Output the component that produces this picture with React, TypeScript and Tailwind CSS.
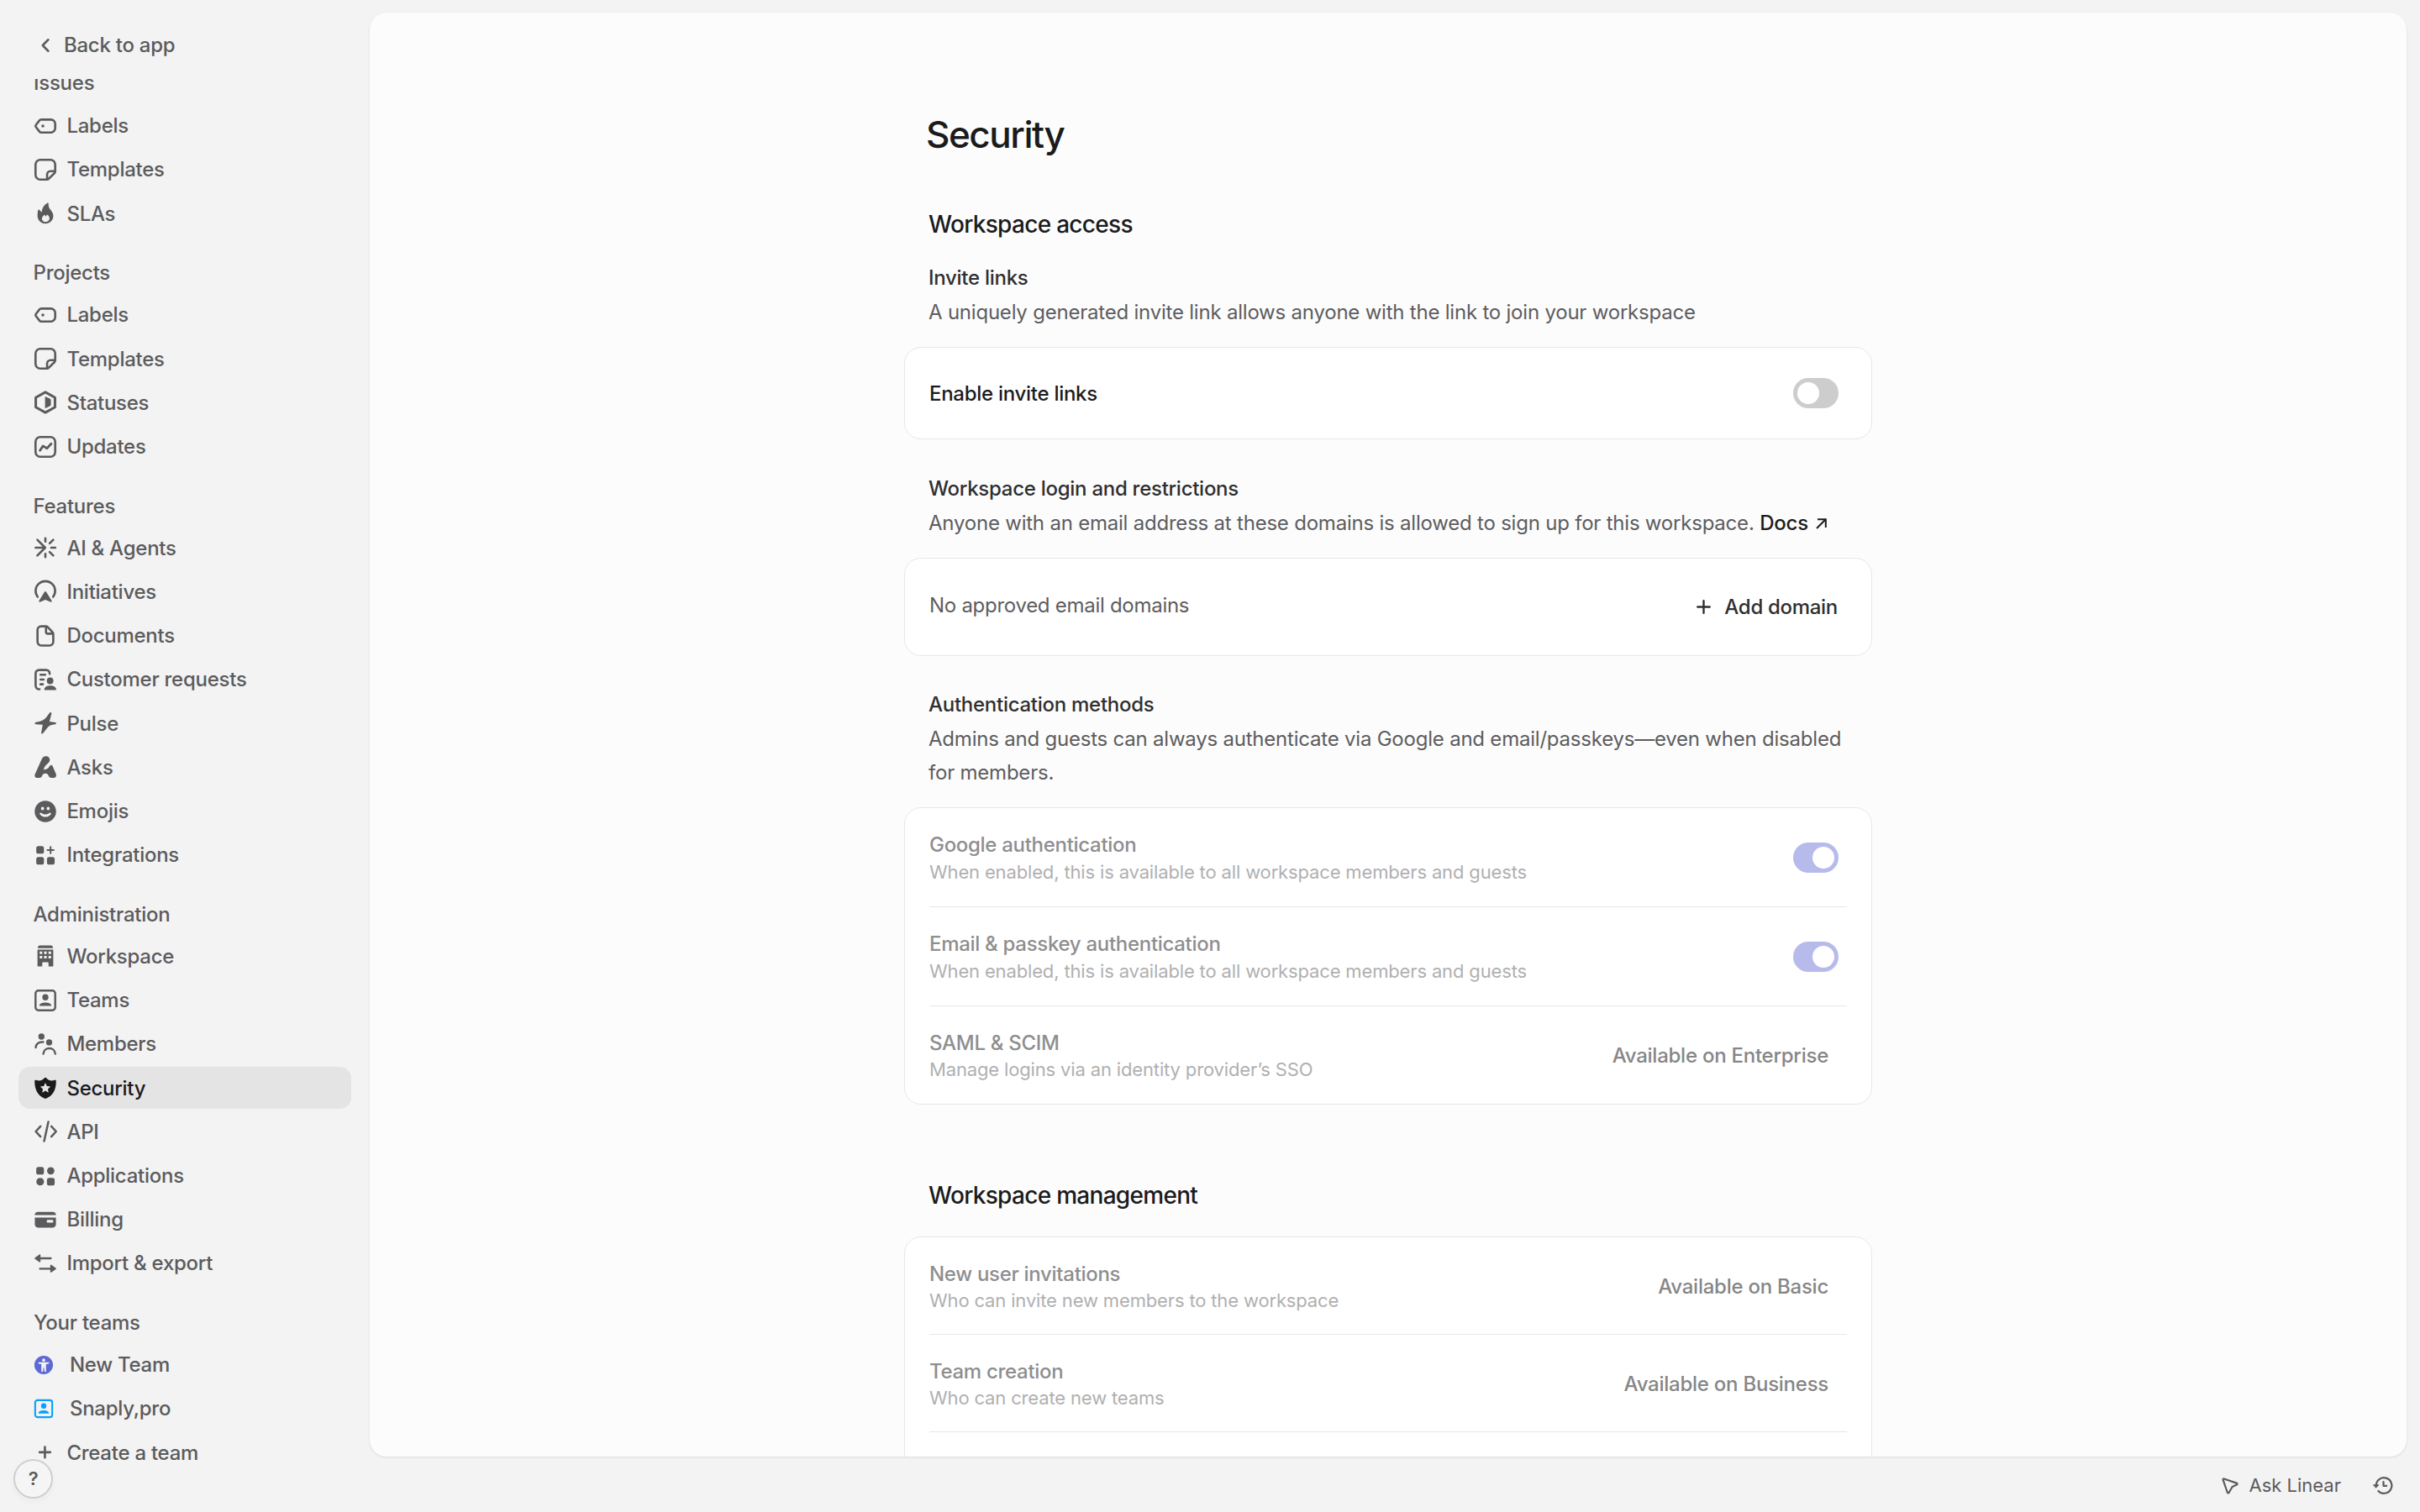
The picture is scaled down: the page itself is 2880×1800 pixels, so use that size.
import type { ReactNode } from "react";

const S = { fill: "none", stroke: "currentColor", strokeWidth: 1.5, strokeLinecap: "round", strokeLinejoin: "round" } as const;

function Icon({ children, size = "w-[30px] h-[30px]" }: { children: ReactNode; size?: string }) {
  return (
    <svg viewBox="0 0 16 16" fill="currentColor" className={`${size} shrink-0`}>
      {children}
    </svg>
  );
}

const icons: Record<string, ReactNode> = {
  labels: (
    <>
      <path {...S} strokeWidth={1.4} d="M5.4 3.9h6.1a2.75 2.75 0 0 1 2.75 2.75v2.7a2.75 2.75 0 0 1-2.75 2.75H5.4a1.5 1.5 0 0 1-1.15-.55L2 8.65a1 1 0 0 1 0-1.3l2.25-2.9A1.5 1.5 0 0 1 5.4 3.9Z" />
      <circle cx="6.4" cy="8" r="0.95" />
    </>
  ),
  templates: (
    <path {...S} strokeWidth={1.4} d="M9.1 14.25H4.75a3 3 0 0 1-3-3v-6.5a3 3 0 0 1 3-3h6.5a3 3 0 0 1 3 3v4.3a1.5 1.5 0 0 1-.44 1.06l-3.7 3.7a1.5 1.5 0 0 1-1.01.44v-3.2A2.15 2.15 0 0 1 11.25 8.9h2.9" />
  ),
  flame: (
    <path fillRule="evenodd" d="M8 14.5c-2.9 0-5-2.1-5-5 0-1.3.1-2.5.3-3.4.1-.5.6-.6.9-.2L5.7 7.3C5.9 4.7 7 2.6 9.2 1.4c.4-.2.8 0 .8.5-.1 1.5.3 2.5 1.2 3.7C12.3 7 13 8 13 9.6c0 2.8-2.1 4.900-5 4.900Zm.1-1.100c1.500 0 2.500-.9 2.500-2.200 0-.8-.4-1.500-1-2.100-.3-.3-.8-.2-.9.2l-.3.7c-.3-.2-.5-.5-.6-.8 0-.3-.3-.4-.5-.2-.9.9-1.500 1.300-1.500 2.300 0 1.200.9 2.100 2.300 2.100Z" />
  ),
  statuses: (
    <>
      <path {...S} strokeWidth={1.6} d="M8 1.550 14.100 4.950v6.100L8 14.450 1.900 11.050v-6.100Z" />
      <path d="M7.800 4.200 10.800 5.600a1.100 1.100 0 0 1 .7 1v2.800a1.100 1.100 0 0 1-.7 1L7.800 11.800Z" />
    </>
  ),
  updates: (
    <>
      <rect {...S} strokeWidth={1.4} x="1.75" y="1.75" width="12.5" height="12.5" rx="3" />
      <path {...S} d="M4.600 10.300 6.500 7.400 9 8.900 11.700 6" />
    </>
  ),
  ai: (
    <path {...S} strokeWidth={1.4} d="M8 2v2.100M8 11.900v2.100M11.700 8h2.600M10.700 5.300l2.300-2.300M10.700 10.700l2.300 2.300M1.800 8h6M2.900 3 7.900 8 2.900 13M6.800 7.500 7.500 8l-.7.500" />
  ),
  initiatives: (
    <>
      <path {...S} strokeWidth={1.4} d="M3.100 11.500a6.200 6.200 0 1 1 9.800 0" />
      <path d="M7.500 8.300c.2-.4.8-.4 1 0l3.500 5.500c.3.600-.2 1.200-.8.900L8 13.300l-3.200 1.400c-.6.300-1.100-.3-.8-.9Z" />
    </>
  ),
  documents: (
    <path {...S} strokeWidth={1.4} d="M8.400 1.900H5.300A2.300 2.300 0 0 0 3 4.200v7.600a2.300 2.300 0 0 0 2.300 2.300h5.400a2.300 2.300 0 0 0 2.300-2.300V6.700c0-.4-.2-.8-.5-1.100L9.400 2.300c-.3-.3-.6-.4-1-.4Zm0 .1v3.400c0 .7.500 1.200 1.200 1.200h3.300" />
  ),
  customer: (
    <>
      <path {...S} strokeWidth={1.4} d="M4.300 14.100h-.3a2.200 2.200 0 0 1-2.200-2.200V4.100a2.200 2.200 0 0 1 2.200-2.200h4.500a2.200 2.200 0 0 1 2.200 2.200v.3M4.900 4.900h3M4.900 8h2M4.900 11h1.500" />
      <circle cx="11" cy="8.800" r="2.100" />
      <path d="M7.300 14.100c.2-1.500 1.800-2.300 3.800-2.300s3.500.8 3.800 2.300c0 .3-.2.600-.5.600H7.800c-.3 0-.5-.3-.5-.6Z" />
    </>
  ),
  pulse: (
    <path d="M11.900 1.900 10.600 6.900l3.700.5c.8.1.8 1.100 0 1.200-2.400.1-4.100.9-5.400 2.700l-2.300 3c-.5.7-1.400.3-1.200-.5l.9-4.900-4.300-.2c-.9-.1-.9-1.200 0-1.400 3.200-.3 5.400-1.500 6.900-3.500l1.700-2.400c.5-.6 1.400-.300 1.300.5Z" />
  ),
  asks: (
    <path d="M5.800 2.800C6.300 1.700 7.200 1.200 8.300 1.200c1.500 0 2.600 1.100 2.500 2.500-.1 1-.8 1.700-1.600 2.400C7.900 7.200 7 8.300 7 9.700c1.500-.1 2.700-.7 3.500-1.900.3-.5.7-1 1.200-1 .4 0 .7.300.9.700l2.200 5.200c.4 1.100-.2 2.200-1.300 2.200h-1.600c-.9 0-1.500-.400-1.800-1.200-.3-.9-1.100-1.600-2.100-1.600s-1.800.7-2.100 1.600c-.3.800-.8 1.200-1.700 1.200H2.800c-1.200 0-1.900-1.100-1.400-2.300Z" />
  ),
  emojis: (
    <path fillRule="evenodd" d="M8 1.200a6.800 6.800 0 1 0 0 13.600A6.800 6.800 0 0 0 8 1.200ZM6.200 5a1 1.100 0 1 0 0 2.200 1 1.100 0 0 0 0-2.200Zm3.600 0a1 1.100 0 1 0 0 2.200 1 1.100 0 0 0 0-2.200ZM5.300 8.900c-.5-.4-1.200.2-.8.800C5.300 10.800 6.600 11.500 8 11.500s2.700-.7 3.500-1.800c.4-.6-.3-1.200-.8-.8-1.600 1.300-3.800 1.300-5.400 0Z" />
  ),
  integrations: (
    <>
      <rect x="2.200" y="2.300" width="4.900" height="4.800" rx="1.400" />
      <rect x="2.200" y="9.200" width="4.900" height="4.800" rx="1.400" />
      <rect x="9" y="9.200" width="4.900" height="4.800" rx="1.400" />
      <path {...S} strokeWidth={1.1} d="M11.300 2.800v4M9.300 4.800h4" />
    </>
  ),
  workspace: (
    <path fillRule="evenodd" d="M4.500 1.300h7c.7 0 1.300.6 1.300 1.400v.4H3.200v-.4c0-.8.600-1.400 1.300-1.400ZM3 4h10v10.200c0 .3-.2.500-.5.500H10v-2.200c0-.3-.2-.5-.5-.5h-3c-.3 0-.5.200-.5.500v2.200H3.500c-.3 0-.5-.2-.5-.5Zm1.400 1.200v1.600H6V5.200Zm2.800 0v1.600h1.600V5.200Zm2.800 0v1.600h1.600V5.200ZM4.400 8v1.600H6V8Zm2.800 0v1.600h1.600V8ZM10 8v1.600h1.600V8Z" />
  ),
  teams: (
    <>
      <rect {...S} strokeWidth={1.3} x="1.75" y="1.75" width="12.5" height="12.5" rx="1.8" />
      <circle cx="8" cy="6" r="1.950" />
      <path d="M4.200 11c.3-1.100 1.900-1.700 3.800-1.700s3.500.6 3.800 1.700c.1.300-.1.500-.4.500H4.600c-.3 0-.5-.2-.4-.5Z" />
    </>
  ),
  members: (
    <>
      <circle cx="5.500" cy="3.200" r="1.950" />
      <circle cx="10.400" cy="6.900" r="1.950" />
      <path {...S} strokeWidth={1.3} d="M1.900 10.200c.2-2.200 1.900-3.600 4.700-3.500M6.700 14.200c.2-2.100 1.700-3.500 3.800-3.500s3.600 1.400 3.800 3.500" />
    </>
  ),
  security: (
    <path fillRule="evenodd" d="M7.400 1.700c.3-.4.900-.4 1.200 0 1.400 1.600 3.100 2.200 5.300 1.400.5-.2.900.1.900.6.100 5.400-2.100 9.300-6 10.900-.5.200-1.100.2-1.600 0-3.900-1.600-6.100-5.500-6-10.900 0-.5.400-.8.900-.6 2.200.8 3.900.2 5.300-1.400ZM8 4.800l-1 2.100-2.300.3 1.700 1.600-.4 2.200L8 9.900l2 1.100-.4-2.200 1.700-1.600-2.300-.3Z" />
  ),
  api: (
    <path {...S} strokeWidth={1.35} d="M4.900 4.700 1.900 8l3 3.300M11.800 4.700l3 3.300-3 3.300M9.900 1.900 7.200 14.100" />
  ),
  applications: (
    <>
      <rect x="2.200" y="2.300" width="4.900" height="4.800" rx="1.400" />
      <circle cx="4.700" cy="11.600" r="2.450" />
      <rect x="9" y="9.200" width="4.900" height="4.800" rx="1.400" />
      <circle cx="11.400" cy="4.700" r="2.350" />
    </>
  ),
  billing: (
    <path fillRule="evenodd" d="M3.200 3h9.600c1 0 1.900.7 1.900 1.700v.4H1.300v-.4c0-1 .9-1.700 1.900-1.700ZM1.300 6.700h13.400v4.400c0 1-.9 1.900-1.900 1.900H3.200c-1 0-1.900-.9-1.900-1.900Zm8.100 1.400c-.3 0-.5.200-.5.500v.7c0 .3.200.5.500.5h3.100c.3 0 .5-.2.500-.5v-.7c0-.3-.2-.5-.5-.5Z" />
  ),
  importExport: (
    <>
      <path {...S} strokeWidth={1.3} d="M4.500 4.800h6.900M4.600 11.400h6.900" />
      <path d="M4.900 2.900v3.900c0 .4-.4.6-.7.400L1.400 5.200c-.3-.2-.3-.6 0-.8l2.800-2c.3-.2.700 0 .7.500ZM11.100 9.400v3.900c0 .4.400.6.700.4l2.800-2c.3-.2.300-.6 0-.8l-2.800-2c-.3-.2-.7 0-.7.500Z" />
    </>
  ),
};

type Item = [string, string];
const groups: { title: string; items: Item[] }[] = [
  { title: "Issues", items: [["labels", "Labels"], ["templates", "Templates"], ["flame", "SLAs"]] },
  { title: "Projects", items: [["labels", "Labels"], ["templates", "Templates"], ["statuses", "Statuses"], ["updates", "Updates"]] },
  {
    title: "Features",
    items: [["ai", "AI & Agents"], ["initiatives", "Initiatives"], ["documents", "Documents"], ["customer", "Customer requests"], ["pulse", "Pulse"], ["asks", "Asks"], ["emojis", "Emojis"], ["integrations", "Integrations"]],
  },
  {
    title: "Administration",
    items: [["workspace", "Workspace"], ["teams", "Teams"], ["members", "Members"], ["security", "Security"], ["api", "API"], ["applications", "Applications"], ["billing", "Billing"], ["importExport", "Import & export"]],
  },
];

function Sidebar() {
  return (
    <aside className="flex h-full w-[440px] shrink-0 flex-col text-[24px] font-medium tracking-[-0.26px] text-[#5b5b5d]">
      <div className="flex h-[94px] shrink-0 items-center pt-[13px] pl-[39px]">
        <Icon><path {...S} strokeWidth={1.35} d="M9.800 4.400 6.300 8l3.500 3.600" /></Icon>
        <span className="ml-[7px]">Back to app</span>
      </div>
      <nav className="min-h-0 flex-1 overflow-hidden">
        <div className="-mt-[19px] flex flex-col gap-[19.9px]">
          {groups.map((g) => (
            <section key={g.title}>
              <h3 className={g.title === "Issues" ? "flex h-[48.6px] items-center pl-[40px]" : "flex h-[48.6px] items-center pt-[2px] pl-[39.5px]"}>{g.title}</h3>
              {g.items.map(([icon, label]) => (
                <div key={label} className="h-[52.23px] px-[22px] py-[0.8px]">
                  <a className={label === "Security" ? "flex h-full items-center rounded-[14px] bg-[#e4e4e4] pl-[17.4px] text-[#1b1b1c]" : "flex h-full items-center pl-[17.4px]"}>
                    <Icon>{icons[icon]}</Icon>
                    <span className="ml-[10px] pt-px">{label}</span>
                  </a>
                </div>
              ))}
            </section>
          ))}
          <section>
            <h3 className="flex h-[48.6px] items-center pt-[2px] pl-[40px]">Your teams</h3>
            <div className="flex h-[52.23px] items-center pl-[39.4px]">
              <span className="text-[#5e6ad2]">
                <Icon size="h-[26px] w-[26px]">
                  <path fillRule="evenodd" d="M8 1.200a6.800 6.800 0 1 0 0 13.600A6.800 6.800 0 0 0 8 1.200ZM8 3.300a1.150 1.150 0 1 0 0 2.300 1.150 1.150 0 0 0 0-2.300ZM4.500 6c-.6 0-.7.900-.1 1l1.900.4v5c0 .8 1.100.8 1.200 0L7.800 9.900h.4l.3 2.500c.1.800 1.200.8 1.200 0v-5l1.900-.4c.6-.1.500-1-.1-1Z" />
                </Icon>
              </span>
              <span className="ml-[17.5px] pt-px">New Team</span>
            </div>
            <div className="flex h-[52.23px] items-center pl-[39.4px]">
              <span className="text-[#08a0ff]"><Icon size="h-[26px] w-[26px]">{icons.teams}</Icon></span>
              <span className="ml-[17.5px] pt-px">Snaply,pro</span>
            </div>
            <div className="flex h-[52.23px] items-center pl-[39.4px]">
              <Icon><path {...S} strokeWidth={1.4} d="M7.700 4.500v6.800M4.300 7.900h6.800" /></Icon>
              <span className="ml-[10px] pt-px">Create a team</span>
            </div>
          </section>
        </div>
      </nav>
      <button className="absolute top-[1737px] left-[16px] flex h-[47px] w-[47px] items-center justify-center rounded-full border-2 border-[#cfcfcf] bg-[#f5f5f5] text-[22px] font-semibold shadow-[0_4px_8px_rgba(0,0,0,0.03)]">?</button>
    </aside>
  );
}

function Toggle({ on = false }: { on?: boolean }) {
  return (
    <span className={on ? "flex h-[36px] w-[54px] items-center justify-end rounded-full bg-[#b7bbeb] px-[5px]" : "flex h-[36px] w-[54px] items-center rounded-full bg-[#cdcdcd] px-[5px]"}>
      <span className="h-[26px] w-[26px] rounded-full bg-white" />
    </span>
  );
}

type RowProps = { title: string; sub: string; children: ReactNode; height: string; lead?: string; last?: boolean };

function Row({ title, sub, children, height, lead = "pt-[3px] leading-[32px]", last }: RowProps) {
  return (
    <div className={`${height} mx-[29px] flex items-center justify-between ${last ? "" : "border-b border-[#e7e7e7]"}`}>
      <div>
        <div className={`${lead} text-[24px] font-medium tracking-[-0.3px] text-[#8e8e8f]`}>{title}</div>
        <div className="text-[22px] leading-[32px] tracking-[-0.15px] text-[#b0b0b1]">{sub}</div>
      </div>
      {children}
    </div>
  );
}

function SectionHead({ title, children }: { title: string; children: ReactNode }) {
  return (
    <div className="ml-[29px] leading-[40px]">
      <h3 className="text-[24px] font-medium tracking-[-0.27px] text-[#2f2f31]">{title}</h3>
      <p className="mt-px text-[24px] tracking-[-0.215px] whitespace-nowrap text-[#5d5d5f]">{children}</p>
    </div>
  );
}

const Available = ({ plan }: { plan: string }) => (
  <span className="pt-[2px] pr-[22px] text-[24px] font-medium tracking-[-0.25px] text-[#868687]">Available on {plan}</span>
);

export default function App() {
  return (
    <div className="relative flex h-[1800px] w-[2880px] overflow-hidden bg-[#f3f3f3] font-['Inter',sans-serif]">
      <Sidebar />
      <div className="flex flex-1 flex-col pt-[15px] pr-[16px]">
        <main className="flex h-[1719px] justify-center overflow-hidden rounded-[20px] bg-[#fcfcfc] shadow-[0_1px_3px_rgba(0,0,0,0.1)]">
          <div className="w-[1152px] shrink-0 pt-[118px]">
            <h1 className="ml-[26px] text-[44px] leading-[54px] font-medium tracking-[-1.45px] text-[#1b1b1c]">Security</h1>
            <h2 className="mt-[63px] mb-[27px] ml-[29px] text-[28px] leading-[34px] font-medium tracking-[-0.7px] text-[#1b1b1c]">Workspace access</h2>
            <SectionHead title="Invite links">A uniquely generated invite link allows anyone with the link to join your workspace</SectionHead>
            <div className="mt-[21px] mb-[39px] flex h-[110px] items-center justify-between rounded-[20px] border border-[#e7e7e7] bg-white pr-[39px] pl-[29px]">
              <span className="pt-[2px] text-[24px] font-medium tracking-[-0.28px] text-[#1b1b1c]">Enable invite links</span>
              <Toggle />
            </div>
            <SectionHead title="Workspace login and restrictions">
              Anyone with an email address at these domains is allowed to sign up for this workspace.{" "}
              <a className="font-medium text-[#1b1b1c]">
                Docs
                <svg viewBox="0 0 13 13" className="ml-[9px] inline-block h-[13px] w-[13px] align-[1px]" fill="none" stroke="currentColor" strokeWidth="2"><path d="M1 12 11.500 1.500M2 1.300h9.800v9.700" /></svg>
              </a>
            </SectionHead>
            <div className="mt-[21px] mb-[38px] flex h-[117px] items-center justify-between rounded-[20px] border border-[#e7e7e7] bg-white pr-[40px] pl-[29px]">
              <span className="pb-[3px] text-[24px] tracking-[-0.28px] text-[#5d5d5f]">No approved email domains</span>
              <button className="flex items-center text-[24px] font-medium tracking-[-0.3px] text-[#2f2f31]">
                <svg viewBox="0 0 17 17" className="mr-[16px] h-[17px] w-[17px]" fill="none" stroke="currentColor" strokeWidth="2.4" strokeLinecap="round"><path d="M8.500 1.300v14.400M1.300 8.500h14.400" /></svg>
                Add domain
              </button>
            </div>
            <SectionHead title="Authentication methods">
              Admins and guests can always authenticate via Google and email/passkeys—even when disabled
              <br />
              for members.
            </SectionHead>
            <div className="mt-[21px] rounded-[20px] border border-[#e7e7e7] bg-white">
              <Row height="h-[118px]" title="Google authentication" sub="When enabled, this is available to all workspace members and guests"><span className="pr-[10px]"><Toggle on /></span></Row>
              <Row height="h-[118px]" title="Email & passkey authentication" sub="When enabled, this is available to all workspace members and guests"><span className="pr-[10px]"><Toggle on /></span></Row>
              <Row height="h-[116px]" lead="pt-[3px] leading-[31px]" last title="SAML & SCIM" sub="Manage logins via an identity provider’s SSO"><Available plan="Enterprise" /></Row>
            </div>
            <h2 className="mt-[91px] mb-[32px] ml-[29px] text-[28px] leading-[34px] font-medium tracking-[-0.7px] text-[#1b1b1c]">Workspace management</h2>
            <div className="h-[400px] rounded-[20px] border border-[#e7e7e7] bg-white">
              <Row height="h-[116px]" lead="pt-[4px] leading-[30px]" title="New user invitations" sub="Who can invite new members to the workspace"><Available plan="Basic" /></Row>
              <Row height="h-[116px]" lead="pt-[4px] leading-[30px]" title="Team creation" sub="Who can create new teams"><Available plan="Business" /></Row>
            </div>
          </div>
        </main>
        <footer className="flex flex-1 items-center justify-end pt-[3px] pr-[16px] text-[22px] text-[#5b5b5d]">
          <svg viewBox="0 0 20 20" className="mr-[13px] h-[20px] w-[20px]" fill="none" stroke="currentColor" strokeWidth="2.2" strokeLinejoin="round"><path d="M1.600 2.600c-.2-.8.400-1.300 1.100-1.100L17.800 6.600c1 .3 1 1.500.1 1.900l-4.800 2.200c-.3.100-.5.300-.6.600L8.700 17.700c-.4.900-1.800.8-2-.200Z" /></svg>
          Ask Linear
          <svg viewBox="0 0 24 22" className="-mt-px ml-[38px] h-[22px] w-[24px]" fill="none" stroke="currentColor" strokeWidth="2.2" strokeLinecap="round" strokeLinejoin="round"><path d="M3.800 11a9.300 9.300 0 1 1 2.600 7M12.500 7v4.800H16.200" /><path fill="currentColor" strokeWidth="1" d="M.8 10.800h6L3.800 14Z" /></svg>
        </footer>
      </div>
    </div>
  );
}
